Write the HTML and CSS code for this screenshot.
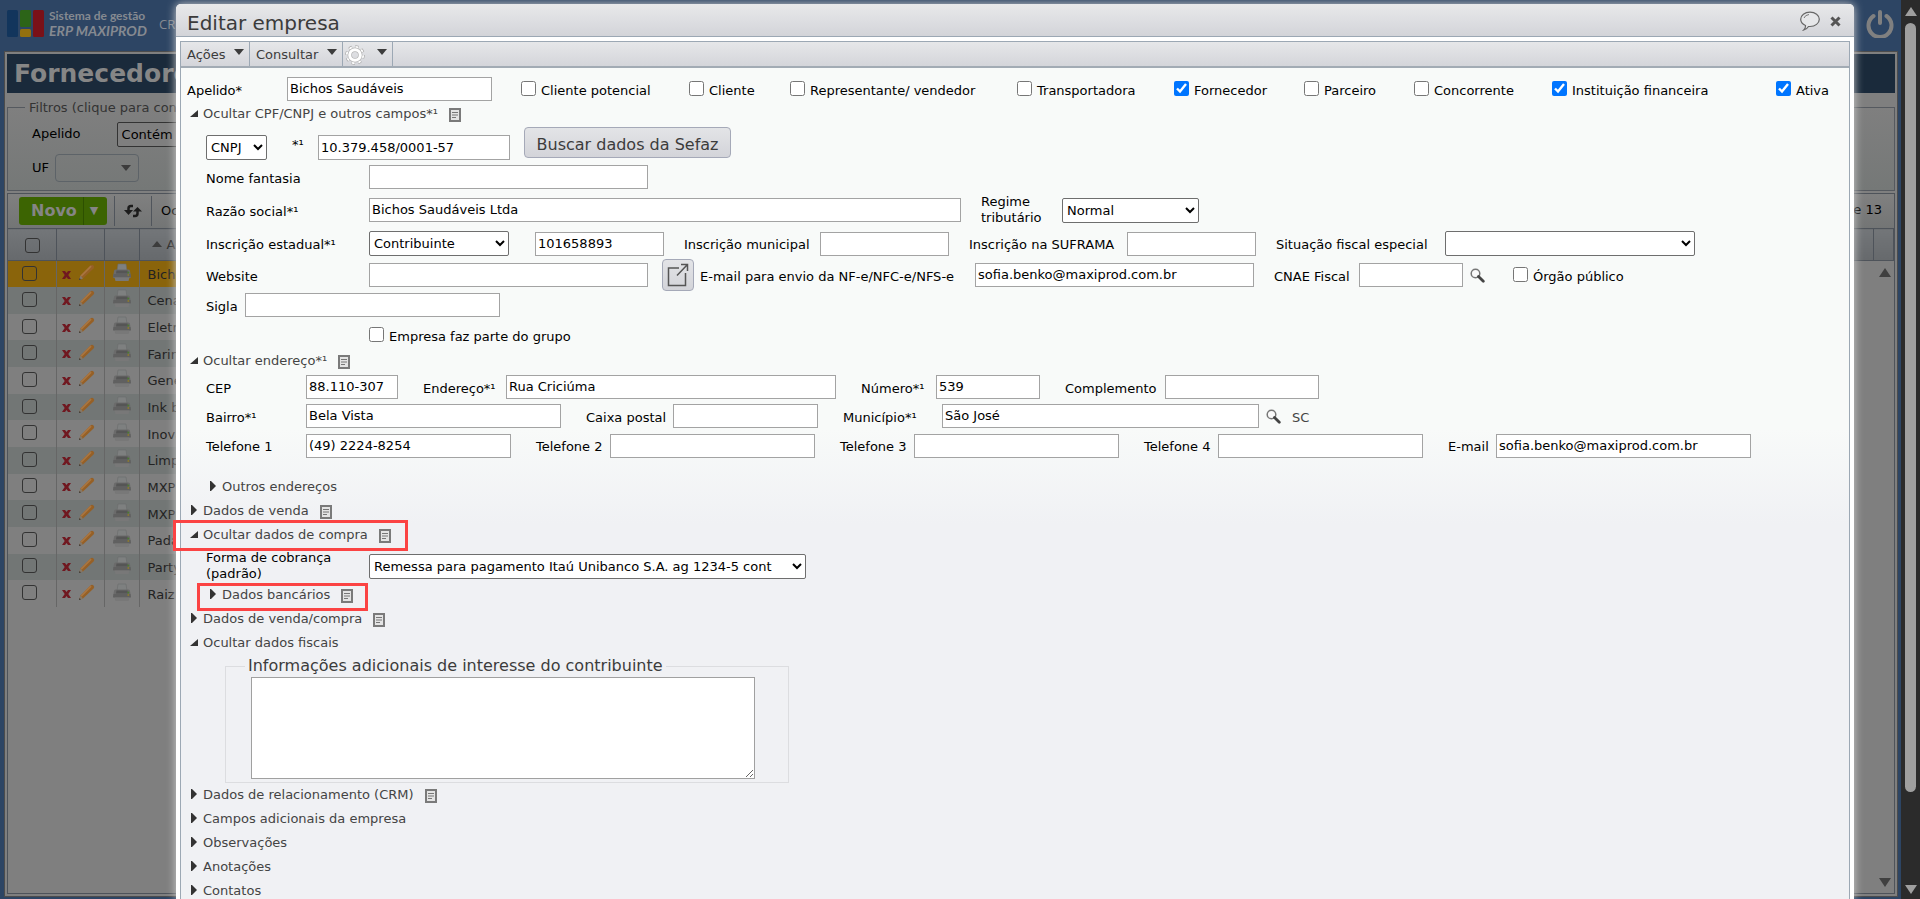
FILE: index.html
```html
<!DOCTYPE html>
<html lang="pt-BR">
<head>
<meta charset="utf-8">
<title>Editar empresa</title>
<link rel="stylesheet" href="styles.css">
</head>
<body>
<svg class="defs" aria-hidden="true">
  <symbol id="i-doc" viewBox="0 0 12 14"><rect x="1" y="1" width="10" height="12" fill="#e4e4e4" stroke="#7a7a7a" stroke-width="2"/><path d="M3 4.500h6M3 7h6M3 9.500h4" stroke="#777" stroke-width="1.200"/></symbol>
  <symbol id="i-open" viewBox="0 0 8 7"><path d="M8 0v7H0z" fill="#333"/></symbol>
  <symbol id="i-closed" viewBox="0 0 6 10"><path d="M0 0h1l5 5-5 5H0z" fill="#333"/></symbol>
  <symbol id="i-down" viewBox="0 0 10 6"><path d="M0 0h10L5 6z" fill="#3c3c3c"/></symbol>
  <symbol id="i-search" viewBox="0 0 15 15"><circle cx="5.500" cy="5.500" r="4.300" fill="#fafafa" stroke="#777" stroke-width="1.500"/><path d="M8.500 8.500l4.800 4.800" stroke="#444" stroke-width="2.800" stroke-linecap="round"/></symbol>
  <symbol id="i-x" viewBox="0 0 9 8"><path d="M0 0h3l1.500 2L6 0h3L6.300 4 9 8H6L4.500 6 3 8H0l2.700-4z" fill="#701820"/></symbol>
  <symbol id="i-pencil" viewBox="0 0 17 17"><path d="M1 16l1.500-4.500L12.500 1.500q1.500-1.500 3 0t0 3L5 14.500z" fill="#966026"/><path d="M2.500 11.500L12.500 1.500l1.200 1.200L3.700 12.800z" fill="#a97540"/><path d="M1 16l1.500-4.500L5 14.500z" fill="#857868"/><path d="M1 16l.6-1.900 1.300 1.300z" fill="#333"/></symbol>
  <symbol id="i-printer" viewBox="0 0 18 19"><path d="M4 8l1-7h8l1 7z" fill="#7e8080" stroke="#6a6c6c" stroke-width=".6"/><path d="M1 8q0-1.500 1.500-1.500h13Q17 6.500 17 8l1 6q0 1-1 1H1q-1 0-1-1z" fill="#6b6b6b"/><path d="M3.500 7.500h11l.5 3H3z" fill="#555"/><path d="M.5 11h17l.4 3H.1z" fill="#606060"/><path d="M1.500 14.500h15l-1 3.500h-13z" fill="#787878"/><circle cx="15.300" cy="9.500" r="1" fill="#4b7a30"/><circle cx="15.300" cy="12" r="1" fill="#8a7a30"/></symbol>
</svg>

<div class="app">
  <div class="site">
    <header class="topbar">
      <svg class="logo" viewBox="0 0 37 27"><rect width="11" height="27" rx="1.500" fill="#12355c"/><rect x="13" width="11" height="17" rx="1.500" fill="#2c6418"/><rect x="13" y="19" width="11" height="8" rx="1.500" fill="#93700f"/><rect x="26" width="11" height="27" rx="1.500" fill="#7a1118"/></svg>
      <div class="brand"><span class="brand-top">Sistema de gestão</span><span class="brand-name">ERP MAXIPROD</span></div>
      <a class="menu-link" href="#crm">CRM</a>
      <button class="power" aria-label="Sair"><svg viewBox="0 0 28 28"><path d="M7.500 6A11.500 11.500 0 1 0 20.500 6" fill="none" stroke="#808080" stroke-width="4" stroke-linecap="round"/><path d="M14 2v11" stroke="#808080" stroke-width="4" stroke-linecap="round"/></svg></button>
    </header>
    <main class="sheet">
      <h1 class="sheet-title">Fornecedores</h1>
      <fieldset class="filters">
        <legend>Filtros (clique para contrair)</legend>
        <div class="filter-row"><label for="f-op">Apelido</label><select id="f-op" class="f-op"><option>Contém</option></select></div>
        <div class="filter-row"><label for="f-uf">UF</label><span class="f-uf-wrap"><input id="f-uf" class="f-uf"><svg class="caret"><use href="#i-down"/></svg></span></div>
      </fieldset>
      <section class="list">
        <div class="list-tools">
          <div class="tool-cell"><button class="novo"><span>Novo</span><span class="novo-more">▼</span></button></div>
          <div class="tool-cell refresh"><svg viewBox="0 0 18 14"><path d="M9 2H7Q4.500 2 4.500 4.500V7" fill="none" stroke="#1c1c1c" stroke-width="2.500"/><path d="M0 6h9L4.500 11z" fill="#1c1c1c"/><path d="M9 12h2q2.500 0 2.500-2.500V7" fill="none" stroke="#1c1c1c" stroke-width="2.500"/><path d="M9 7.500h9L13.500 3z" fill="#1c1c1c"/></svg></div>
          <a class="tool-link" href="#ocultar">Ocultar</a>
          <span class="count">1 a 13 de 13</span>
        </div>
        <div class="list-body">
          <table class="grid">
            <colgroup><col class="c-check"><col class="c-edit"><col class="c-print"><col><col class="c-more"><col class="c-gutter"></colgroup>
            <thead><tr><th><input type="checkbox" class="dim" aria-label="Selecionar todos"></th><th></th><th></th><th class="sorted"><svg class="sort"><use href="#i-down"/></svg>Apelido</th><th></th><th></th></tr></thead>
            <tbody id="rows"></tbody>
          </table>
          <div class="list-scroll"><span class="tri-up"></span><span class="tri-down"></span></div>
        </div>
      </section>
    </main>
  </div>
  <div class="scrollbar"><span class="sb-up"></span><span class="thumb"></span><span class="sb-down"></span></div>

  <div class="dialog" role="dialog" aria-labelledby="dlg-title">
    <header class="dlg-head">
      <h2 id="dlg-title">Editar empresa</h2>
      <button class="plain" aria-label="Comentários"><svg width="20" height="20" viewBox="0 0 20 20"><path d="M5.500 14.500Q.7 12.500.7 8.300C.7 4.300 4.800 1.200 10 1.200s9.300 3.100 9.300 7.100-4.100 7.200-9.300 7.200H8.500Q7 18 3.800 19q1.900-2 1.700-4.500z" fill="#e6e7e9" stroke="#666" stroke-width="1.200"/><path d="M4 7q1-3 5-3.500" fill="none" stroke="#777"/></svg></button>
      <button class="plain" aria-label="Fechar"><svg width="11" height="11" viewBox="0 0 11 11"><path d="M1.500 1.500l8 8M9.500 1.500l-8 8" stroke="#555" stroke-width="3"/></svg></button>
    </header>
    <div class="dlg-box">
      <nav class="dlg-tools">
        <button>Ações<svg class="caret"><use href="#i-down"/></svg></button>
        <button>Consultar<svg class="caret"><use href="#i-down"/></svg></button>
        <button class="gear" aria-label="Configurações"><svg width="20" height="20" viewBox="0 0 20 20"><circle cx="10" cy="10" r="8" fill="none" stroke="#aaa" stroke-width="3.600" stroke-dasharray="3.200 3.080"/><circle cx="10" cy="10" r="8" fill="none" stroke="#fff" stroke-width="2.200" stroke-dasharray="2.600 3.680" stroke-dashoffset="-.3"/><circle cx="10" cy="10" r="5.300" fill="none" stroke="#b5b5b5" stroke-width="4.400"/><circle cx="10" cy="10" r="5.300" fill="none" stroke="#fff" stroke-width="3"/></svg><svg class="caret"><use href="#i-down"/></svg></button>
      </nav>
      <form class="form">
        <div class="row r-types">
          <label for="apelido">Apelido*</label><input id="apelido" value="Bichos Saudáveis">
          <label class="check first"><input type="checkbox">Cliente potencial</label>
          <label class="check"><input type="checkbox">Cliente</label>
          <label class="check"><input type="checkbox">Representante/ vendedor</label>
          <label class="check"><input type="checkbox">Transportadora</label>
          <label class="check"><input type="checkbox" checked>Fornecedor</label>
          <label class="check"><input type="checkbox">Parceiro</label>
          <label class="check"><input type="checkbox">Concorrente</label>
          <label class="check"><input type="checkbox" checked>Instituição financeira</label>
          <label class="check"><input type="checkbox" checked>Ativa</label>
        </div>
        <div class="head"><svg class="open"><use href="#i-open"/></svg><a href="#cpf">Ocultar CPF/CNPJ e outros campos*¹</a><svg class="doc"><use href="#i-doc"/></svg></div>
        <div class="row r-cnpj">
          <select aria-label="Tipo de documento"><option>CNPJ</option></select><label class="lead-25" for="cnpj">*¹</label><input id="cnpj" value="10.379.458/0001-57"><button type="button" class="btn">Buscar dados da Sefaz</button>
        </div>
        <div class="row r-nome"><label for="nome">Nome fantasia</label><input id="nome"></div>
        <div class="row r-razao"><label for="razao">Razão social*¹</label><input id="razao" value="Bichos Saudáveis Ltda"><label class="lead-20 two" for="regime">Regime tributário</label><select id="regime"><option>Normal</option></select></div>
        <div class="row r-inscr">
          <label for="ie-tipo">Inscrição estadual*¹</label><select id="ie-tipo"><option>Contribuinte</option></select><input class="gap-26" aria-label="Número da inscrição estadual" value="101658893">
          <label class="lead-20" for="im">Inscrição municipal</label><input id="im">
          <label class="lead-20" for="suf">Inscrição na SUFRAMA</label><input id="suf">
          <label class="lead-20" for="sit">Situação fiscal especial</label><select id="sit"><option></option></select>
        </div>
        <div class="row r-web">
          <label for="web">Website</label><input id="web">
          <button type="button" class="btn btn-icon" aria-label="Abrir website"><svg width="22" height="24" viewBox="0 0 22 24"><path d="M12 5H1.500v17.500h17V10" fill="none" stroke="#555" stroke-width="1.500"/><path d="M10 12.500L20 2M14 1.500h6.500V8" fill="none" stroke="#555" stroke-width="1.500"/></svg></button>
          <label class="lead-6" for="nfe">E-mail para envio da NF-e/NFC-e/NFS-e</label><input id="nfe" value="sofia.benko@maxiprod.com.br">
          <label class="lead-20" for="cnae">CNAE Fiscal</label><input id="cnae"><svg class="mag"><use href="#i-search"/></svg>
          <label class="check orgao"><input type="checkbox">Órgão público</label>
        </div>
        <div class="row r-sigla"><label for="sigla">Sigla</label><input id="sigla"></div>
        <div class="row r-grupo"><label class="check"><input type="checkbox">Empresa faz parte do grupo</label></div>

        <div class="head"><svg class="open"><use href="#i-open"/></svg><a href="#end">Ocultar endereço*¹</a><svg class="doc"><use href="#i-doc"/></svg></div>
        <div class="row r-cep">
          <label for="cep">CEP</label><input id="cep" value="88.110-307"><label class="lead-25" for="rua">Endereço*¹</label><input id="rua" value="Rua Criciúma"><label class="lead-25" for="num">Número*¹</label><input id="num" value="539"><label class="lead-25" for="compl">Complemento</label><input id="compl">
        </div>
        <div class="row r-bairro">
          <label for="bairro">Bairro*¹</label><input id="bairro" value="Bela Vista"><label class="lead-25" for="cx">Caixa postal</label><input id="cx"><label class="lead-25" for="mun">Município*¹</label><input id="mun" value="São José"><svg class="mag"><use href="#i-search"/></svg><span class="uf">SC</span>
        </div>
        <div class="row r-fone">
          <label for="t1">Telefone 1</label><input id="t1" value="(49) 2224-8254"><label class="lead-25" for="t2">Telefone 2</label><input id="t2"><label class="lead-25" for="t3">Telefone 3</label><input id="t3"><label class="lead-25" for="t4">Telefone 4</label><input id="t4"><label class="lead-25" for="em">E-mail</label><input id="em" value="sofia.benko@maxiprod.com.br">
        </div>
        <div class="head sub spaced"><svg class="closed"><use href="#i-closed"/></svg><a href="#outros">Outros endereços</a></div>
        <div class="head"><svg class="closed"><use href="#i-closed"/></svg><a href="#venda">Dados de venda</a><svg class="doc"><use href="#i-doc"/></svg></div>
        <div class="head marked mark-compra"><svg class="open"><use href="#i-open"/></svg><a href="#compra">Ocultar dados de compra</a><svg class="doc"><use href="#i-doc"/></svg></div>
        <div class="row r-forma"><label class="two" for="forma">Forma de cobrança (padrão)</label><select id="forma"><option>Remessa para pagamento Itaú Unibanco S.A. ag 1234-5 cont</option></select></div>
        <div class="head sub marked mark-banco"><svg class="closed"><use href="#i-closed"/></svg><a href="#banco">Dados bancários</a><svg class="doc"><use href="#i-doc"/></svg></div>
        <div class="head"><svg class="closed"><use href="#i-closed"/></svg><a href="#vc">Dados de venda/compra</a><svg class="doc"><use href="#i-doc"/></svg></div>
        <div class="head"><svg class="open"><use href="#i-open"/></svg><a href="#fiscais">Ocultar dados fiscais</a></div>
        <fieldset class="info"><legend>Informações adicionais de interesse do contribuinte</legend><textarea aria-label="Informações adicionais de interesse do contribuinte"></textarea></fieldset>
        <div class="head"><svg class="closed"><use href="#i-closed"/></svg><a href="#crm2">Dados de relacionamento (CRM)</a><svg class="doc"><use href="#i-doc"/></svg></div>
        <div class="head"><svg class="closed"><use href="#i-closed"/></svg><a href="#campos">Campos adicionais da empresa</a></div>
        <div class="head"><svg class="closed"><use href="#i-closed"/></svg><a href="#obs">Observações</a></div>
        <div class="head"><svg class="closed"><use href="#i-closed"/></svg><a href="#anot">Anotações</a></div>
        <div class="head"><svg class="closed"><use href="#i-closed"/></svg><a href="#cont">Contatos</a></div>
      </form>
    </div>
  </div>
</div>
<script src="rows.js"></script>
</body>
</html>
```
FILE: rows.js
```js
const names = ["Bichos", "Cena", "Eletro", "Farin", "Gene", "Ink b", "Inova", "Limp", "MXP", "MXP", "Pada", "Party", "Raiz"];
document.getElementById("rows").innerHTML = names.map(n =>
  `<tr><td><input type="checkbox" class="dim" aria-label="${n}"></td>` +
  `<td><span class="acts"><svg class="ix"><use href="#i-x"/></svg><svg class="ip"><use href="#i-pencil"/></svg></span></td>` +
  `<td><svg class="ipr"><use href="#i-printer"/></svg></td><td class="name">${n}</td></tr>`).join("");
```
FILE: styles.css
```css
*, *::after { box-sizing: border-box; }
body { margin: 0; font: 13px/16px Verdana, "DejaVu Sans", sans-serif; color: #000; }
button, input, select, textarea { font: inherit; color: inherit; margin: 0; }
button { cursor: pointer; }
a { color: inherit; text-decoration: none; }
.defs { position: absolute; width: 0; height: 0; }

.app { position: relative; display: flex; height: 100vh; overflow: hidden; background: #2d4564; }
.site { flex: 1; display: flex; flex-direction: column; padding: 0 3px 2px 4px; min-width: 0; }

.topbar { height: 51px; display: flex; align-items: center; padding: 0 4px 4px 3px; color: #858a91; }
.logo { width: 37px; height: 27px; }
.brand { margin-left: 5px; width: 110px; display: flex; flex-direction: column; font-family: Lato, sans-serif; font-weight: bold; white-space: nowrap; }
.brand-top { font-size: 12px; line-height: 14px; }
.brand-name { font-size: 14px; font-style: italic; line-height: 16px; }
.menu-link { font-family: "Open Sans", sans-serif; }
.power { margin-left: auto; background: none; border: 0; padding: 0; width: 28px; height: 28px; }
.power svg { width: 28px; height: 28px; display: block; }

.sheet { flex: 1; display: flex; flex-direction: column; background: #7f7f7f; border: 1px solid #4c4c4c; padding: 2px; }
.sheet-title { margin: 0; height: 39px; padding: 0 7px; background: #1a2a3b; color: #868686; font-size: 25px; line-height: 39px; }
.filters { margin: 5px 0 0; height: 93px; border: 1px solid #55595f; padding: 6px 24px; background: linear-gradient(#7f7f7f, #757877); }
.filters legend { margin-left: -7px; padding: 0 4px; height: 18px; line-height: 20px; color: #333; }
.filter-row { display: flex; align-items: center; gap: 36px; height: 24px; }
.filter-row + .filter-row { margin-top: 8px; height: 28px; gap: 6px; }
.f-op { width: 120px; height: 25px; background: #7f7f7f; border: 1px solid #333; border-radius: 2px; }
.f-uf-wrap { display: flex; align-items: center; width: 84px; height: 28px; border: 1px solid #5d6368; border-radius: 4px; padding-right: 7px; }
.f-uf { flex: 1; min-width: 0; background: none; border: 0; }
.caret { width: 10px; height: 6px; }

.list { flex: 1; display: flex; flex-direction: column; margin-top: 2px; border: 1px solid #4e535a; }
.list-tools { display: flex; height: 34px; align-items: center; background: linear-gradient(#808080, #737575); }
.tool-cell { height: 30px; display: flex; align-items: center; padding-left: 11px; border-right: 1px solid #50555c; width: 107px; }
.tool-cell.refresh { width: 37px; padding-left: 9px; }
.refresh svg { width: 18px; height: 14px; }
.novo { height: 28px; width: 88px; display: flex; align-items: center; padding: 0 0 0 12px; background: #3c6402; border: 0; border-radius: 3px; color: #858585; font-size: 16px; font-weight: bold; }
.novo-more { margin-left: 6px; padding-left: 6px; border-left: 1px solid #2d5000; height: 28px; line-height: 28px; font-size: 11px; }
.tool-link { margin-left: 9px; }
.count { margin-left: auto; margin-right: 12px; padding-bottom: 3px; }
.list-body { position: relative; flex: 1; }
.grid { width: 100%; border-collapse: collapse; table-layout: fixed; height: 379px; }
.c-check, .c-edit { width: 48px; }
.c-print { width: 35px; }
.c-more { width: 60px; }
.c-gutter { width: 20px; }
.grid th { height: 32px; background: linear-gradient(#737679, #66696c); border: 1px solid #4e535a; border-left: 0; padding: 0; font-weight: normal; }
.grid th:first-child { padding-left: 2px; }
.grid th.sorted { text-align: left; padding-left: 12px; color: #2b2b2b; }
.sort { width: 10px; height: 6px; transform: rotate(180deg); margin: 0 5px 2px 0; }
.grid td { padding: 0 0 3px; height: 26px; text-align: center; vertical-align: middle; border-right: 1px solid #666; }
.grid td:first-child { padding-right: 5px; }
.grid tbody tr:nth-child(even) td { background: #727675; }
.grid tbody tr:first-child td { background: #8a640b; }
.grid td.name { text-align: left; padding: 2px 0 0 8px; border: 0; color: #222; }
.dim { appearance: none; display: inline-block; vertical-align: middle; width: 15px; height: 15px; border: 1px solid #333; border-radius: 3px; }
.acts { display: flex; align-items: center; gap: 7px; padding-left: 5px; }
.ix { width: 9px; height: 8px; margin-top: 4px; }
.ip { width: 17px; height: 17px; }
.ipr { width: 18px; height: 19px; display: block; margin: 0 auto; }
.list-scroll { position: absolute; top: 33px; bottom: 4px; right: 3px; width: 12px; padding: 7px 0 2px; display: flex; flex-direction: column; justify-content: space-between; }
.tri-up, .tri-down { border: 6px solid transparent; border-top: 0; border-bottom: 9px solid #404040; }
.tri-down { border-bottom: 0; border-top: 9px solid #404040; }

.scrollbar { width: 19px; background: #2b2b2b; display: flex; flex-direction: column; align-items: center; padding: 7px 0 5px; }
.sb-up, .sb-down { border: 6px solid transparent; border-top: 0; border-bottom: 9px solid #9f9f9f; }
.sb-down { border-bottom: 0; border-top: 9px solid #9f9f9f; }
.thumb { width: 11px; margin: 7px 0 93px; flex: 1; border-radius: 6px; background: #9f9f9f; }

.dialog { position: absolute; top: 4px; left: 176px; right: 66px; bottom: 0; background: #fff; border-radius: 5px 5px 0 0; box-shadow: 0 0 10px #d0d0d0; display: flex; flex-direction: column; }
.dlg-head { flex: none; height: 33px; display: flex; align-items: center; gap: 10px; padding: 2px 13px 0 11px; border-bottom: 1px solid #9ca8b4; border-radius: 5px 5px 0 0; background: linear-gradient(#e8e9ea, #d3d4d9); color: #3b3b3b; }
.dlg-head h2 { margin: 0; padding-top: 4px; flex: 1; font-size: 20px; line-height: 26px; font-weight: normal; }
.plain { border: 0; background: none; padding: 0; display: flex; }
.dlg-box { margin: 4px 4px 0; flex: 1 0 auto; border: 1px solid #9ca8b4; border-bottom: 0; background: linear-gradient(#f8faf9 45%, #f0f1f4 56%); }
.dlg-tools { display: flex; height: 26px; border-bottom: 2px solid #a2abb4; background: linear-gradient(#e6e7e9, #d4d5da); }
.dlg-tools button { display: flex; align-items: center; justify-content: space-between; width: 93px; padding: 2px 5px 0 6px; border: 0; border-right: 1px solid #9ca8b4; background: none; color: #3c3c3c; }
.dlg-tools button:first-child { width: 69px; }
.dlg-tools button.gear { width: 50px; padding-left: 2px; }
.dlg-tools .caret { margin-bottom: 6px; }

.form { padding-top: 8px; }
.row { display: grid; align-items: center; height: 24px; margin-top: 5px; padding-left: 25px; white-space: nowrap; }
.row input:not([type]) { width: auto; min-width: 0; height: 24px; border: 1px solid #a3a3a3; background: #fff; padding: 0 2px 1px; border-radius: 0; }
.row select { height: 25px; min-width: 0; border: 1px solid #6e6e6e; border-radius: 2px; background: #fff; padding: 0; }
.row input[type=checkbox] { width: 15px; height: 15px; }
.row > label { padding-top: 3px; }
.row > label.two { white-space: normal; padding-top: 0; }
.row > .lead-6 { padding-left: 6px; }
.row > .lead-20 { padding-left: 20px; }
.row > .lead-25 { padding-left: 25px; }
.row > .check { display: flex; align-items: center; gap: 5px; padding-top: 3px; }
.check input { margin-bottom: 4px; }
.gap-26 { margin-left: 26px; }
.mag { width: 15px; height: 15px; justify-self: end; }
.uf { padding-left: 11px; padding-top: 3px; color: #444; }

.r-types { height: 26px; margin-top: 0; padding-left: 6px; grid-template-columns: 100px 205px 29px 168px 101px 227px 157px 130px 110px 138px 224px auto; }
.r-types .first { grid-column: 4; }
.r-cnpj { height: 34px; margin-top: 0; grid-template-columns: 61px 51px 192px 221px; align-items: end; }
.r-cnpj label { align-self: center; }
.r-cnpj input:not([type]) { height: 25px; }
.btn { height: 31px; margin: 0 0 2px 14px; border: 1px solid #a5a9b8; border-radius: 4px; background: linear-gradient(#e3e4e7, #d3d4d9); color: #3c3c3c; font-size: 16px; padding: 4px 0 0; }
.r-nome { grid-template-columns: 163px 279px; }
.r-razao { height: 32px; grid-template-columns: 163px 592px 101px 137px; }
.r-inscr { height: 25px; grid-template-columns: 163px 140px 155px 156px 129px 178px 129px 189px 250px; }
.r-web { height: 32px; margin-top: 3px; grid-template-columns: 163px 279px 46px 281px 279px 105px 104px 22px auto; }
.btn-icon { height: 32px; margin-bottom: 0; padding: 0; display: flex; align-items: center; justify-content: center; }
.row > .orgao { padding-left: 28px; }
.r-sigla { margin-top: 2px; grid-template-columns: 39px 255px; }
.r-grupo { margin-top: 6px; margin-bottom: 2px; padding-left: 188px; }
.r-cep { margin-top: 2px; grid-template-columns: 100px 92px 108px 330px 100px 104px 125px 154px; }
.r-bairro { grid-template-columns: 100px 255px 112px 145px 124px 317px 22px auto; }
.r-fone { height: 25px; grid-template-columns: 100px 205px 99px 205px 99px 205px 99px 205px 73px 255px; }
.r-forma { height: 32px; margin: 3px 0 1px; grid-template-columns: 163px 437px; }

.head { position: relative; display: grid; grid-template-columns: 13px auto auto; justify-content: start; align-items: center; height: 24px; padding-left: 9px; color: #444; }
.head.sub { padding-left: 28px; }
.head.spaced { margin-top: 17px; }
.open { width: 8px; height: 7px; margin-bottom: 2px; }
.closed { width: 6px; height: 10px; margin: 0 0 3px 1px; }
.doc { width: 12px; height: 14px; margin-left: 11px; margin-top: 2px; }
.marked::after { content: ""; position: absolute; border: 3px solid #fb4343; }
.mark-compra::after { left: -8px; top: -3px; width: 235px; height: 31px; }
.mark-banco::after { left: 16px; top: 0; width: 171px; height: 28px; }

.info { margin: 1px 0 0 44px; width: 564px; border: 1px solid #dcdde0; padding: 1px 25px 3px; }
.info legend { margin-left: -6px; padding: 0 3px; font-size: 16px; line-height: 20px; color: #3c3c3c; }
.info textarea { display: block; width: 504px; height: 102px; border: 1px solid #a0a0a0; background: #fff; }
```
